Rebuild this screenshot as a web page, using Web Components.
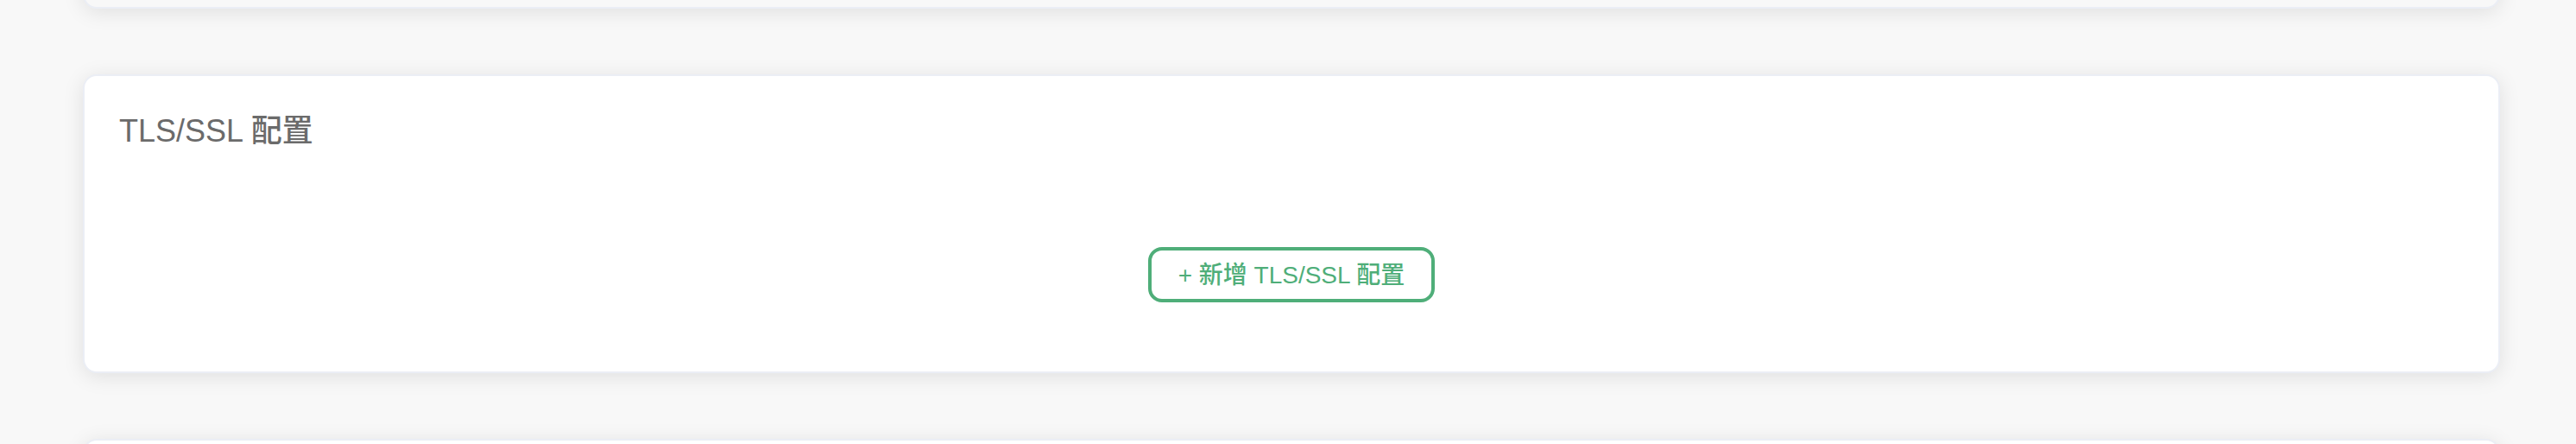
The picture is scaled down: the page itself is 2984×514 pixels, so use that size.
<!DOCTYPE html>
<html lang="zh-CN">
<head>
<meta charset="utf-8">
<meta name="viewport" content="width=device-width, initial-scale=1">
<title>TLS/SSL 配置</title>
<style>
  html, body { margin: 0; height: 100%; }
  body {
    overflow: hidden;
    background: #f8f8f8;
    color: #6b6b6b;
    font-family: "Liberation Sans", "Noto Sans CJK SC", sans-serif;
  }
</style>
</head>
<body>
<settings-page>
  <settings-card muted></settings-card>
  <settings-card>
    <span slot="title">TLS/SSL 配置</span>
    <add-button>+ 新增 TLS/SSL 配置</add-button>
  </settings-card>
  <settings-card></settings-card>
</settings-page>

<script>
  class ShadowElement extends HTMLElement {
    constructor() {
      super();
      this.attachShadow({ mode: "open" }).innerHTML = this.constructor.markup;
    }
  }

  class SettingsPage extends ShadowElement {
    static markup = `
      <style>
        :host { display: block; height: 100%; overflow: hidden; }
        /* The list is scrolled so that only the foot of its first card shows. */
        main {
          display: flex; flex-direction: column; gap: 76px;
          margin-top: -74px; padding: 0 88px 0 96px;
        }
      </style>
      <main><slot></slot></main>`;
  }

  class SettingsCard extends ShadowElement {
    static markup = `
      <style>
        :host {
          display: block; box-sizing: border-box; min-height: 84px;
          background: #fff; border: 2px solid #ebeef5; border-radius: 16px;
          box-shadow: 0 4px 24px rgba(0, 0, 0, 0.1);
        }
        :host([muted]) { background: #f8f8f8; }
        h2 { margin: 0; padding: 0 40px; font-size: 36px; font-weight: 500; line-height: 48px; }
        ::slotted([slot="title"]) { display: block; padding: 40px 0 0; }
        .body { display: flex; justify-content: center; }
        ::slotted(add-button) { margin: 110px 0 80px; }
      </style>
      <h2><slot name="title"></slot></h2>
      <div class="body"><slot></slot></div>`;
  }

  class AddButton extends ShadowElement {
    static markup = `
      <style>
        :host { display: block; }
        button {
          display: block; box-sizing: border-box; margin: 0; padding: 9px 31px 7px;
          border: 4px solid #4fae79; border-radius: 16px;
          background: #fff; color: #4fae79; cursor: pointer;
          font-family: inherit; font-size: 28px; font-weight: 500; line-height: 40px;
          white-space: nowrap;
        }
      </style>
      <button type="button"><slot></slot></button>`;
  }

  customElements.define("settings-page", SettingsPage);
  customElements.define("settings-card", SettingsCard);
  customElements.define("add-button", AddButton);
</script>
</body>
</html>
